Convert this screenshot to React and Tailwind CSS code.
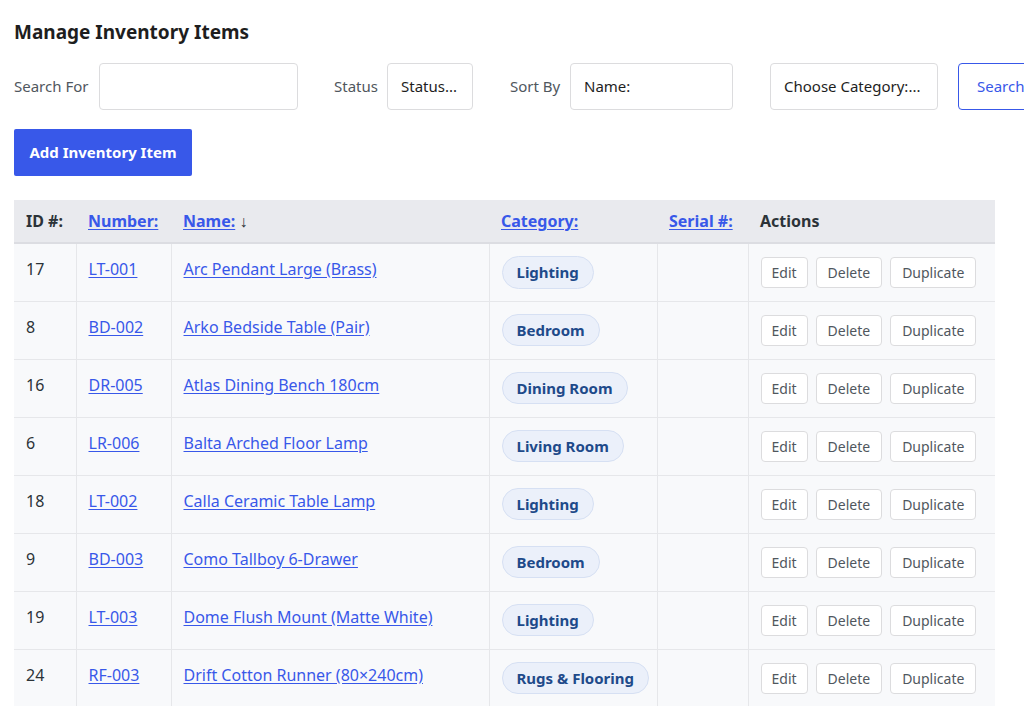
import React from "react";

const rows = [
  ["17", "LT-001", "Arc Pendant Large (Brass)", "Lighting"],
  ["8", "BD-002", "Arko Bedside Table (Pair)", "Bedroom"],
  ["16", "DR-005", "Atlas Dining Bench 180cm", "Dining Room"],
  ["6", "LR-006", "Balta Arched Floor Lamp", "Living Room"],
  ["18", "LT-002", "Calla Ceramic Table Lamp", "Lighting"],
  ["9", "BD-003", "Como Tallboy 6-Drawer", "Bedroom"],
  ["19", "LT-003", "Dome Flush Mount (Matte White)", "Lighting"],
  ["24", "RF-003", "Drift Cotton Runner (80×240cm)", "Rugs & Flooring"],
];

const Box = ({ w, children }) => (
  <div className={`${w} shrink-0 h-[47px] border border-[#dcdcde] rounded-[4px] bg-white flex items-center px-[13px] text-[15px] text-[#1e1e1e]`}>
    {children}
  </div>
);

const link = "text-[#3858e9] underline underline-offset-2";

const App = () => {
  return (
    <div className="w-[1024px] h-[706px] overflow-hidden bg-white px-[14px] pt-[20px] font-['Liberation_Sans','Inter',sans-serif] text-[#1e1e1e]">
      <h1 className="text-[19px] font-bold leading-[24px]">Manage Inventory Items</h1>
      <div className="flex items-center mt-[19px] whitespace-nowrap">
        <span className="w-[85px] shrink-0 text-[15px] text-[#50575e]">Search For</span>
        <Box w="w-[199px]" />
        <span className="ml-[36px] w-[53px] shrink-0 text-[15px] text-[#50575e]">Status</span>
        <Box w="w-[86px]">Status...</Box>
        <span className="ml-[37px] w-[60px] shrink-0 text-[15px] text-[#50575e]">Sort By</span>
        <Box w="w-[163px]">Name:</Box>
        <div className="ml-[37px]"><Box w="w-[168px]">Choose Category:...</Box></div>
        <div className="ml-[20px] h-[47px] w-[120px] shrink-0 border border-[#3858e9] rounded-[4px] flex items-center px-[18px] text-[15px] text-[#3858e9]">Search</div>
      </div>
      <button className="mt-[19px] h-[47px] w-[178px] bg-[#3858e9] rounded-[2px] text-white text-[15px] font-bold">Add Inventory Item</button>
      <table className="mt-[24px] w-[981px] border-collapse text-[16px] table-fixed">
        <colgroup>
          <col className="w-[62px]" />
          <col className="w-[95px]" />
          <col className="w-[318px]" />
          <col className="w-[168px]" />
          <col className="w-[91px]" />
          <col className="w-[247px]" />
        </colgroup>
        <thead>
          <tr className="bg-[#e9eaee] h-[43px] border-b-2 border-[#dcdde2] text-left">
            <th className="px-[12px] font-bold text-[#2c3338]">ID #:</th>
            <th className="px-[12px] font-bold"><span className={link}>Number:</span></th>
            <th className="px-[12px] font-bold"><span className={link}>Name:</span> <span className="text-[#2c3338]">↓</span></th>
            <th className="px-[12px] font-bold"><span className={link}>Category:</span></th>
            <th className="px-[12px] font-bold"><span className={link}>Serial #:</span></th>
            <th className="px-[12px] font-bold text-[#2c3338]">Actions</th>
          </tr>
        </thead>
        <tbody>
          {rows.map((r) => (
            <tr key={r[0]} className="h-[58px] bg-[#f8f9fb] border-b border-[#e6e7ea]">
              <td className="px-[12px] pt-[13px] align-top text-[#2c3338]">{r[0]}</td>
              <td className="px-[12px] pt-[13px] align-top border-l border-[#e6e7ea]"><span className={link}>{r[1]}</span></td>
              <td className="px-[12px] pt-[13px] align-top border-l border-[#e6e7ea] whitespace-nowrap"><span className={link}>{r[2]}</span></td>
              <td className="px-[12px] border-l border-[#e6e7ea]">
                <span className="inline-block bg-[#ebf0fa] border border-[#d6e0f3] rounded-full px-[14px] py-[4px] text-[15px] font-bold text-[#1e4a8a] whitespace-nowrap">{r[3]}</span>
              </td>
              <td className="border-l border-[#e6e7ea]"></td>
              <td className="px-[12px] border-l border-[#e6e7ea]">
                <div className="flex gap-[8px] text-[14px] text-[#50575e]">
                  <span className="bg-white border border-[#dcdcde] rounded-[4px] px-[10px] py-[4px]">Edit</span>
                  <span className="bg-white border border-[#dcdcde] rounded-[4px] px-[11px] py-[4px]">Delete</span>
                  <span className="bg-white border border-[#dcdcde] rounded-[4px] px-[11px] py-[4px]">Duplicate</span>
                </div>
              </td>
            </tr>
          ))}
        </tbody>
      </table>
    </div>
  );
};

export default App;
